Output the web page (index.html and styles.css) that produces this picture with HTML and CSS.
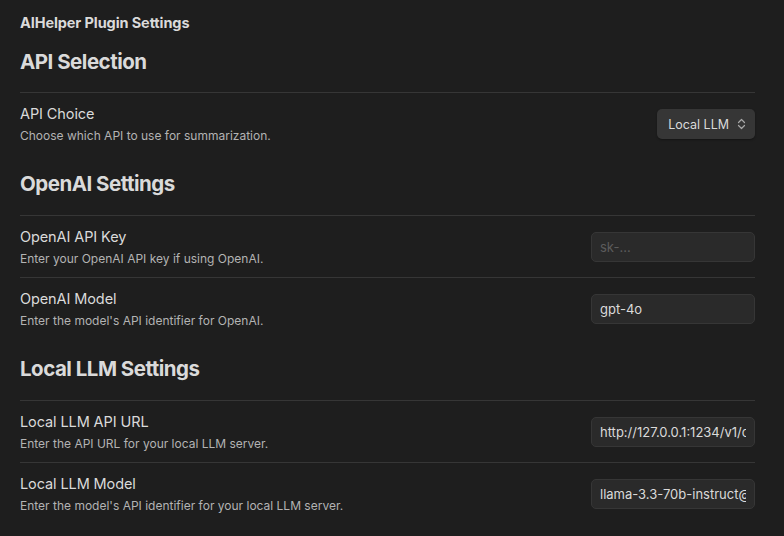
FILE: index.html
```html
<!DOCTYPE html>
<html>
<head>
<meta charset="utf-8">
<link rel="stylesheet" href="styles.css">
</head>
<body>
<div class="page">
  <div class="title">AIHelper Plugin Settings</div>

  <div class="heading first">API Selection</div>
  <div class="item">
    <div class="info">
      <div class="name">API Choice</div>
      <div class="desc">Choose which API to use for summarization.</div>
    </div>
    <div class="control">
      <div class="dropdown">
        <span>Local LLM</span>
        <svg class="chev" width="9" height="12" viewBox="0 0 9 12"><path d="M1.5 4.5 L4.5 1.5 L7.5 4.5 M1.5 7.5 L4.5 10.5 L7.5 7.5" fill="none" stroke="#a8a8a8" stroke-width="1.2" stroke-linecap="round" stroke-linejoin="round"/></svg>
      </div>
    </div>
  </div>

  <div class="heading">OpenAI Settings</div>
  <div class="item">
    <div class="info">
      <div class="name">OpenAI API Key</div>
      <div class="desc">Enter your OpenAI API key if using OpenAI.</div>
    </div>
    <div class="control"><input class="input" type="text" placeholder="sk-..." readonly></div>
  </div>
  <div class="item">
    <div class="info">
      <div class="name">OpenAI Model</div>
      <div class="desc">Enter the model's API identifier for OpenAI.</div>
    </div>
    <div class="control"><input class="input" type="text" value="gpt-4o" readonly></div>
  </div>

  <div class="heading">Local LLM Settings</div>
  <div class="item">
    <div class="info">
      <div class="name">Local LLM API URL</div>
      <div class="desc">Enter the API URL for your local LLM server.</div>
    </div>
    <div class="control"><input class="input" type="text" value="http://127.0.0.1:1234/v1/chat/completions" readonly></div>
  </div>
  <div class="item">
    <div class="info">
      <div class="name">Local LLM Model</div>
      <div class="desc">Enter the model's API identifier for your local LLM server.</div>
    </div>
    <div class="control"><input class="input" type="text" value="llama-3.3-70b-instruct@q4_k_m" readonly></div>
  </div>
</div>
</body>
</html>
```

FILE: styles.css
```css
html, body {
  margin: 0;
  padding: 0;
  background: #1e1e1e;
}
body {
  font-family: Inter, "Noto Sans", sans-serif;
  color: #dadada;
  width: 784px;
  height: 536px;
  overflow: hidden;
}
.page {
  padding: 0 29px 0 20px;
}
.title {
  font-size: 14.5px;
  font-weight: 700;
  line-height: 20px;
  padding-top: 13px;
  letter-spacing: -0.1px;
}
.heading {
  font-size: 20.5px;
  font-weight: 700;
  line-height: 28px;
  height: 61px;
  box-sizing: border-box;
  padding-top: 16px;
  letter-spacing: -0.5px;
}
.heading.first {
  height: 59px;
  padding-top: 15px;
}
.item {
  display: flex;
  align-items: center;
  height: 62px;
  box-sizing: border-box;
  padding: 11px 0 10px;
  border-top: 1px solid #363636;
}
.info {
  flex: 1;
}
.name {
  font-size: 14.5px;
  line-height: 20px;
  letter-spacing: -0.1px;
}
.desc {
  font-size: 12px;
  line-height: 18px;
  color: #b3b3b3;
  margin-top: 3px;
}
.control {
  display: flex;
  align-items: center;
}
.dropdown {
  display: flex;
  align-items: center;
  gap: 8px;
  height: 30px;
  box-sizing: border-box;
  padding: 0 9px 0 11px;
  background: #363636;
  border-radius: 5px;
  font-size: 12.5px;
  color: #dadada;
  box-shadow: 0 1px 2px rgba(0,0,0,0.35);
}
.input {
  display: block;
  margin: 0;
  width: 164px;
  height: 30px;
  box-sizing: border-box;
  padding: 0 8px;
  background: #2a2a2a;
  border: 1px solid #363636;
  border-radius: 5px;
  font-family: Inter, "Noto Sans", sans-serif;
  font-size: 13px;
  color: #dadada;
  outline: none;
}
.input::placeholder {
  color: #5c5c5c;
  opacity: 1;
}
```
